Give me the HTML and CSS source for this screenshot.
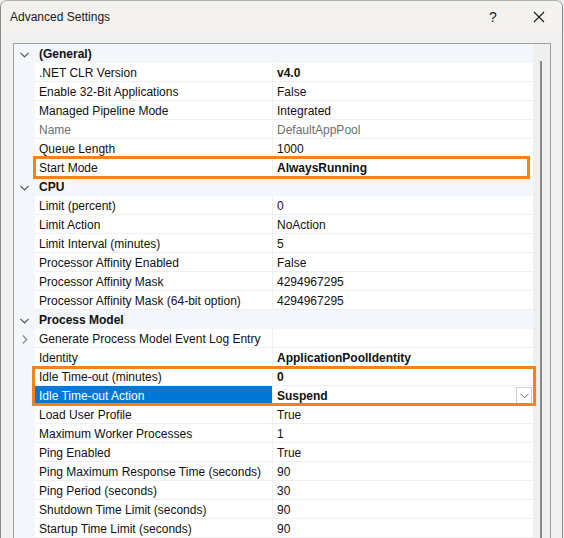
FILE: index.html
```html
<!DOCTYPE html>
<html>
<head>
<meta charset="utf-8">
<link rel="stylesheet" href="styles.css">
</head>
<body>
<div class="window">
  <div class="titlebar">
    <span class="title">Advanced Settings</span>
    <span class="tb-btn help">?</span>
    <span class="tb-btn close"><svg width="12" height="12" viewBox="0 0 12 12"><path d="M1 1L11 11M11 1L1 11" stroke="#1a1a1a" stroke-width="1.1" fill="none"/></svg></span>
  </div>
  <div class="body">
    <div class="grid-frame">
      <div class="grid">
        <div class="cat"><span class="gut"><svg class="chev" width="9" height="6" viewBox="0 0 9 6"><path d="M0.5 0.8L4.5 4.8L8.5 0.8" stroke="#555" stroke-width="1.2" fill="none"/></svg></span><span class="cat-name">(General)</span></div>
        <div class="row"><span class="gut"></span><span class="name">.NET CLR Version</span><span class="val b">v4.0</span></div>
        <div class="row"><span class="gut"></span><span class="name">Enable 32-Bit Applications</span><span class="val">False</span></div>
        <div class="row"><span class="gut"></span><span class="name">Managed Pipeline Mode</span><span class="val">Integrated</span></div>
        <div class="row dis"><span class="gut"></span><span class="name">Name</span><span class="val">DefaultAppPool</span></div>
        <div class="row"><span class="gut"></span><span class="name">Queue Length</span><span class="val">1000</span></div>
        <div class="row"><span class="gut"></span><span class="name">Start Mode</span><span class="val b">AlwaysRunning</span></div>
        <div class="cat"><span class="gut"><svg class="chev" width="9" height="6" viewBox="0 0 9 6"><path d="M0.5 0.8L4.5 4.8L8.5 0.8" stroke="#555" stroke-width="1.2" fill="none"/></svg></span><span class="cat-name">CPU</span></div>
        <div class="row"><span class="gut"></span><span class="name">Limit (percent)</span><span class="val">0</span></div>
        <div class="row"><span class="gut"></span><span class="name">Limit Action</span><span class="val">NoAction</span></div>
        <div class="row"><span class="gut"></span><span class="name">Limit Interval (minutes)</span><span class="val">5</span></div>
        <div class="row"><span class="gut"></span><span class="name">Processor Affinity Enabled</span><span class="val">False</span></div>
        <div class="row"><span class="gut"></span><span class="name">Processor Affinity Mask</span><span class="val">4294967295</span></div>
        <div class="row"><span class="gut"></span><span class="name">Processor Affinity Mask (64-bit option)</span><span class="val">4294967295</span></div>
        <div class="cat"><span class="gut"><svg class="chev" width="9" height="6" viewBox="0 0 9 6"><path d="M0.5 0.8L4.5 4.8L8.5 0.8" stroke="#555" stroke-width="1.2" fill="none"/></svg></span><span class="cat-name">Process Model</span></div>
        <div class="row"><span class="gut"><svg class="chev" width="6" height="9" viewBox="0 0 6 9"><path d="M0.8 0.5L4.8 4.5L0.8 8.5" stroke="#888" stroke-width="1.2" fill="none"/></svg></span><span class="name">Generate Process Model Event Log Entry</span><span class="val"></span></div>
        <div class="row"><span class="gut"></span><span class="name">Identity</span><span class="val b">ApplicationPoolIdentity</span></div>
        <div class="row"><span class="gut"></span><span class="name">Idle Time-out (minutes)</span><span class="val b">0</span></div>
        <div class="row sel"><span class="gut"></span><span class="name">Idle Time-out Action</span><span class="val b">Suspend<span class="dd"><svg width="9" height="6" viewBox="0 0 9 6"><path d="M0.5 0.8L4.5 4.8L8.5 0.8" stroke="#666" stroke-width="1" fill="none"/></svg></span></span></div>
        <div class="row"><span class="gut"></span><span class="name">Load User Profile</span><span class="val">True</span></div>
        <div class="row"><span class="gut"></span><span class="name">Maximum Worker Processes</span><span class="val">1</span></div>
        <div class="row"><span class="gut"></span><span class="name">Ping Enabled</span><span class="val">True</span></div>
        <div class="row"><span class="gut"></span><span class="name">Ping Maximum Response Time (seconds)</span><span class="val">90</span></div>
        <div class="row"><span class="gut"></span><span class="name">Ping Period (seconds)</span><span class="val">30</span></div>
        <div class="row"><span class="gut"></span><span class="name">Shutdown Time Limit (seconds)</span><span class="val">90</span></div>
        <div class="row"><span class="gut"></span><span class="name">Startup Time Limit (seconds)</span><span class="val">90</span></div>
      </div>
      <div class="scroll"><div class="thumb"></div></div>
      <div class="hl hl1"></div>
      <div class="hl hl2"></div>
    </div>
  </div>
</div>
</body>
</html>
```
FILE: styles.css
```css
html, body {
  margin: 0;
  padding: 0;
  width: 564px;
  height: 538px;
  overflow: hidden;
  background: #f0f0f0;
}
.window {
  width: 563px;
  height: 540px;
  border-left: 1px solid #8a8a8a;
  border-right: 1px solid #8a8a8a;
  border-top: 1px solid #b0b0b0;
  border-radius: 7px 7px 0 0;
  box-sizing: border-box;
  background: #f0f0f0;
  font-family: "Liberation Sans", Arial, sans-serif;
  font-size: 12px;
  color: #111;
  overflow: hidden;
}
.titlebar {
  height: 31px;
  background: #f3f2ef;
  display: flex;
  align-items: center;
  padding-left: 9px;
}
.title {
  flex: 1;
  font-size: 12px;
  color: #1a1a1a;
  padding-top: 0;
}
.tb-btn {
  display: flex;
  justify-content: center;
  align-items: center;
}
.help {
  width: 46px;
  font-size: 14px;
  color: #1a1a1a;
  padding-left: 2px;
}
.close {
  width: 46px;
}
.body {
  padding: 11px 0 0 12px;
}
.grid-frame {
  position: relative;
  width: 536px;
  border: 1px solid #a0a0a0;
  border-bottom: none;
  display: flex;
  height: 520px;
}
.grid {
  width: 519px;
  background: #fff;
}
.scroll {
  width: 17px;
  background: #efefef;
  position: relative;
}
.thumb {
  position: absolute;
  left: 7px;
  top: 17px;
  width: 2px;
  bottom: 0;
  background: #8a8a8a;
}
.row, .cat {
  display: grid;
  grid-template-columns: 21px 238px 260px;
  height: 19px;
}
.cat {
  background: #f3f6fa;
  font-weight: bold;
}
.gut {
  background: #f3f6fa;
  display: flex;
  align-items: center;
  justify-content: center;
  padding-left: 1px;
  padding-top: 1px;
}
.cat .gut {
  justify-content: flex-start;
  padding-left: 6px;
}
.cat-name {
  padding-left: 4px;
  padding-top: 1px;
  line-height: 19px;
  grid-column: 2 / 4;
}
.name, .val {
  padding-left: 4px;
  padding-top: 2px;
  line-height: 16px;
  border-bottom: 1px solid #f0f0f0;
  box-sizing: border-box;
  white-space: nowrap;
  overflow: hidden;
}
.name {
  border-right: 1px solid #f0f0f0;
}
.b {
  font-weight: bold;
}
.dis .name, .dis .val {
  color: #6d6d6d;
}
.sel .name {
  background: #0078d7;
  color: #fff;
}
.sel .val {
  position: relative;
}
.dd {
  position: absolute;
  right: 1px;
  top: 1px;
  width: 14px;
  height: 15px;
  border: 1px solid #cfcfcf;
  background: #fff;
  display: flex;
  align-items: center;
  justify-content: center;
}
.hl {
  position: absolute;
  border: 3px solid #f7821b;
  box-sizing: border-box;
  pointer-events: none;
}
.hl1 {
  left: 19px;
  top: 112px;
  width: 497px;
  height: 23px;
}
.hl2 {
  left: 18px;
  top: 322px;
  width: 504px;
  height: 40px;
}
```
